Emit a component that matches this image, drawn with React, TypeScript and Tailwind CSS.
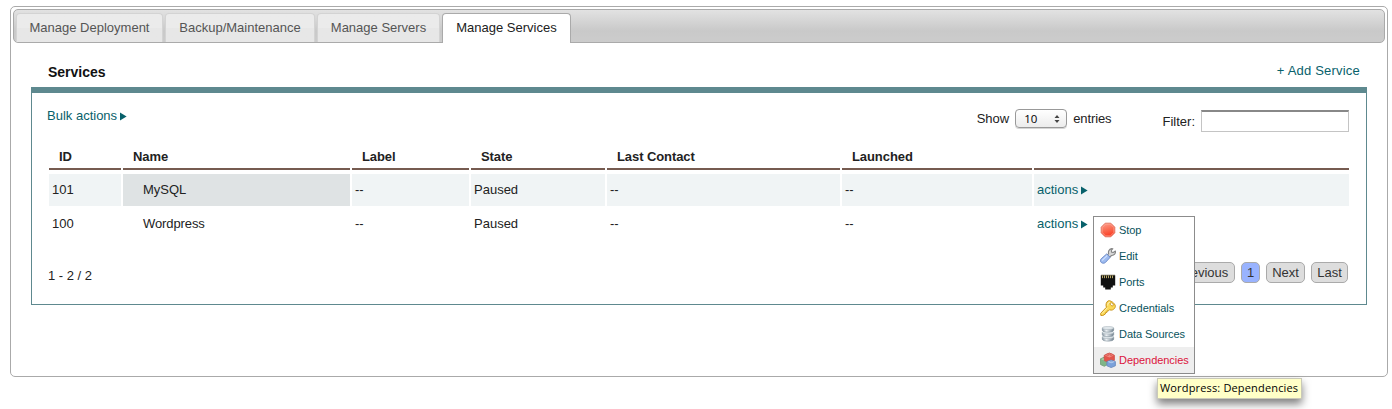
import type { ReactNode } from 'react';

const TABS = [
  { label: 'Manage Deployment', width: 'w-[147px]' },
  { label: 'Backup/Maintenance', width: 'w-[150px]' },
  { label: 'Manage Servers', width: 'w-[123px]' },
];

const COLUMNS = ['ID', 'Name', 'Label', 'State', 'Last Contact', 'Launched', ''];

const ROWS = [
  { id: '101', name: 'MySQL', state: 'Paused' },
  { id: '100', name: 'Wordpress', state: 'Paused' },
];

const GRID =
  'grid grid-cols-[72px_227px_117px_134px_233px_190px_315px] gap-x-[2px]';

function Arrow() {
  return (
    <svg width="7" height="9" viewBox="0 0 7 9" className="ml-[3px] shrink-0">
      <path d="M0 0.5 L6.6 4.5 L0 8.5Z" fill="#08616b" />
    </svg>
  );
}

function StopIcon() {
  return (
    <svg width="16" height="16" viewBox="0 0 16 16">
      <defs>
        <linearGradient id="stop" x1="0" y1="0" x2="0.3" y2="1">
          <stop offset="0" stopColor="#ffa090" />
          <stop offset="0.5" stopColor="#fa7158" />
          <stop offset="1" stopColor="#fb4127" />
        </linearGradient>
      </defs>
      <path d="M5.200 1.200h5.600L14.800 5.200v5.600L10.800 14.800H5.200L1.200 10.800V5.200z" fill="url(#stop)" stroke="#e27a68" />
      <path d="M5.600 2.300h4.800l3.300 3.300v4.800l-3.300 3.300H5.600l-3.300-3.300V5.600z" fill="none" stroke="#ffb0a0" strokeWidth=".8" strokeOpacity=".6" />
    </svg>
  );
}

function WrenchIcon() {
  return (
    <svg width="16" height="16" viewBox="0 0 16 16">
      <path d="M7.200 7.200L8.600 5.600C8 3.400 9 1.300 11.600 .6L12.900 .7 11.300 2.500l.3 1.600 1.600.4L15.400 3c.5 2.500-1.200 4.600-3.800 4.500L9.400 9.300z" fill="#d6d6d6" stroke="#858585" strokeWidth="1.100" strokeLinejoin="round" />
      <path d="M6.700 5.900L10.200 9.300 5.400 14.500C3.400 16.200 .1 14.800.4 12.200c.1-.6.4-1 .8-1.400z" fill="#9dbbf0" stroke="#6686c4" strokeWidth=".9" />
      <path d="M6.900 7.900L2.500 12.100" stroke="#cfe0ff" strokeWidth="1.300" strokeLinecap="round" />
    </svg>
  );
}

function PortIcon() {
  return (
    <svg width="16" height="16" viewBox="0 0 16 16">
      <path d="M.8 1.200h14.400v10.300h-2.400v2h-2v2H5.200v-2h-2v-2H.8z" fill="#111" />
      <path d="M1 1.300h14" stroke="#4c4733" strokeWidth="1" />
      <path d="M2.500 1.500v2.700M4.500 1.500v2.700M6.500 1.500v2.700M8.500 1.500v2.700M10.500 1.500v2.700M12.500 1.500v2.700" stroke="#b5a566" strokeWidth="1" />
    </svg>
  );
}

function KeyIcon() {
  return (
    <svg width="16" height="16" viewBox="0 0 16 16">
      <path
        d="M8.200 .9c1.600-.8 5.500 1.300 6.900 4.200.9 1.900-.8 4.600-3.500 5-.8.1-1.400-.1-2-.4L8.500 10.800l-1.300.1-.2 1.400-1.300.2-.3 1.400-2.600 1.700-2-.2L.7 13.300 6.400 7.300C5.400 4.500 6.500 1.700 8.200.9z"
        fill="#fbd957" stroke="#c8931d" strokeWidth="1" strokeLinejoin="round"
      />
      <path d="M2 13.500L7.500 7.700" stroke="#fff3b5" strokeWidth="1" />
      <path d="M7.700 5.500C7.700 3.500 8.600 2 10 2.200" stroke="#fff5c2" strokeWidth="1" fill="none" />
      <ellipse cx="11.700" cy="4.400" rx="1.900" ry="1.200" transform="rotate(45 11.700 4.400)" fill="#fff" stroke="#c8931d" strokeWidth=".8" />
    </svg>
  );
}

function DatabaseIcon() {
  return (
    <svg width="16" height="16" viewBox="0 0 16 16">
      <defs>
        <linearGradient id="disk" x1="0" x2="1">
          <stop offset="0" stopColor="#83919d" />
          <stop offset="0.35" stopColor="#eef3f6" />
          <stop offset="1" stopColor="#6f7f8c" />
        </linearGradient>
      </defs>
      {[11, 6.5, 2].map((y) => (
        <g key={y}>
          <path d={`M2.300 ${y}v2.200c0 2.600 11.400 2.600 11.400 0v-2.200z`} fill="url(#disk)" stroke="#7b8a96" strokeWidth=".5" />
          <ellipse cx="8" cy={y} rx="5.700" ry="1.600" fill="#dfe6ea" stroke="#a3aeb7" strokeWidth=".5" />
        </g>
      ))}
    </svg>
  );
}

function BricksIcon() {
  return (
    <svg width="16" height="16" viewBox="0 0 16 16">
      <path d="M.5 6.800L4 5.300l3.500 1.500v5.700L4.300 14.300.5 12.500z" fill="#7fb587" stroke="#6d9c75" strokeWidth=".8" />
      <path d="M1.200 7l3.100 1.400 2.700-1.200L4 6z" fill="#b5dbb9" />
      <path d="M4.200 3.300L9.400 1l5 2.200v5.200L9.400 10.700 4.200 8.500z" fill="#e3554c" stroke="#c9504a" strokeWidth=".8" />
      <path d="M4.900 3.500l4.500 2 4.300-2-4.300-2z" fill="#f28a82" />
      <ellipse cx="7.600" cy="2.600" rx="1.400" ry=".9" fill="#f0766c" stroke="#c4514a" strokeWidth=".5" />
      <ellipse cx="11.200" cy="2.600" rx="1.400" ry=".9" fill="#f0766c" stroke="#c4514a" strokeWidth=".5" />
      <path d="M6.900 9.600l4.300-1.600 4.200 1.600v4.200l-4.200 1.800-4.300-1.800z" fill="#7ba2db" stroke="#6485ba" strokeWidth=".8" />
      <path d="M7.500 9.800l3.700 1.500 3.600-1.500-3.600-1.300z" fill="#bed5f5" />
      <ellipse cx="11.200" cy="9.300" rx="1.300" ry=".8" fill="#9dbdea" stroke="#6688bb" strokeWidth=".4" />
    </svg>
  );
}

const MENU: { label: string; icon: ReactNode; active?: boolean }[] = [
  { label: 'Stop', icon: <StopIcon /> },
  { label: 'Edit', icon: <WrenchIcon /> },
  { label: 'Ports', icon: <PortIcon /> },
  { label: 'Credentials', icon: <KeyIcon /> },
  { label: 'Data Sources', icon: <DatabaseIcon /> },
  { label: 'Dependencies', icon: <BricksIcon />, active: true },
];

function ActionMenu() {
  return (
    <div className="absolute left-[59px] top-[8px] z-10 w-[102px] border border-[#8c8c8c] bg-white text-[11px] tracking-[-0.05px] text-[#08525c]">
      {MENU.map((m) => (
        <div
          key={m.label}
          className={
            m.active
              ? 'flex h-[26px] items-center bg-[#eeeeee] pl-[6px] text-[#dc143c]'
              : 'flex h-[26px] items-center pl-[6px]'
          }
        >
          <span className="mr-[3px] w-4 shrink-0">{m.icon}</span>
          <span className="whitespace-nowrap">{m.label}</span>
        </div>
      ))}
      <div className="absolute left-[63px] top-[161px] flex h-[21px] w-[145px] items-center whitespace-nowrap border border-[#c9c9b8] bg-[#ffffc7] pb-px pl-[2px] font-['Open_Sans',sans-serif] text-[11px] tracking-[0.16px] text-black shadow-[0_5px_9px_rgba(0,0,0,0.5)]">
        Wordpress: Dependencies
      </div>
    </div>
  );
}

function PageButton({ children, className }: { children: ReactNode; className: string }) {
  return (
    <button className={`flex h-[21px] items-center justify-center rounded-[5px] border border-[#aaaaaa] pt-px text-[#333333] ${className}`}>
      {children}
    </button>
  );
}

export default function App() {
  return (
    <div className="h-[409px] w-[1392px] overflow-hidden bg-white pl-[10px] pt-[6px] font-['Liberation_Sans',Arial,sans-serif] text-[13px] leading-[16px] text-[#222222]">
      <div className="h-[371px] w-[1378px] rounded-[5px] border border-[#aaaaaa] p-[2px]">
        <div className="flex h-[34px] items-start gap-[2px] rounded-[5px] border border-[#aaaaaa] bg-linear-to-b from-[#e2e2e2] from-0% via-[#c9c9c9] via-65% to-[#cccccc] pl-[2px] pt-[3px] text-[#555555]">
          {TABS.map((t) => (
            <div
              key={t.label}
              className={`flex h-[29px] items-center justify-center rounded-t-[4px] border border-b-0 border-[#d3d3d3] bg-linear-to-b from-[#ebebeb] from-50% to-[#e7e7e7] to-50% ${t.width}`}
            >
              {t.label}
            </div>
          ))}
          <div className="flex h-[30px] w-[129px] items-center justify-center rounded-t-[4px] border border-b-0 border-[#aaaaaa] bg-white pb-px text-[#212121]">
            Manage Services
          </div>
        </div>

        <div className="flex h-[44px] items-center justify-between pl-[35px] pr-[25px] pt-[12px]">
          <h2 className="pt-px text-[14px] font-bold text-[#111111]">Services</h2>
          <a className="tracking-[0.2px] text-[#08616b]">+ Add Service</a>
        </div>

        <div className="ml-[18px] h-[218px] w-[1336px] border border-t-[6px] border-[#5e898f] pl-[17px] pr-[17px]">
          <div className="flex h-[50px] items-start">
            <a className="ml-[-2px] mt-[15px] flex items-center text-[#08616b]">
              Bulk actions
              <Arrow />
            </a>
            <div className="ml-auto mr-[51px] mt-[16px] flex items-center">
              <span>Show</span>
              <span className="ml-[6px] mr-[6px] flex h-[19px] w-[52px] items-center justify-between rounded-[4px] border border-[#999999] bg-linear-to-b from-white to-[#ececec] pl-[8px] pr-[6px] font-['Open_Sans',sans-serif] text-[11.5px] text-black shadow-[0_1px_0_#d5d5d5]">
                10
                <svg width="6" height="8" viewBox="0 0 6 8">
                  <path d="M0.500 3L3 0l2.500 3zM0.500 5L3 8l2.500-3z" fill="#444" />
                </svg>
              </span>
              <span className="tracking-[-0.1px]">entries</span>
            </div>
            <label className="mt-[17px] flex items-center">
              <span className="mt-px">Filter:</span>
              <input className="ml-[6px] h-[22px] w-[148px] border border-[#c4c4c4] border-t-2 border-t-[#888888] bg-white outline-none" />
            </label>
          </div>

          <div className={`${GRID} font-bold text-[#222222]`}>
            {COLUMNS.map((c, i) => (
              <div key={i} className="h-[27px] border-b-2 border-[#765b50] pl-[10px] pt-[6px] tracking-[-0.08px]">
                {c}
              </div>
            ))}
          </div>

          {ROWS.map((r, i) => {
            const cell = i === 0 ? 'flex items-center pl-[3px] bg-[#f0f4f5]' : 'flex items-center pl-[3px]';
            return (
              <div key={r.id} className={i === 0 ? `${GRID} mt-[4px] h-[32px]` : `${GRID} mt-[2px] h-[32px]`}>
                <div className={cell}>{r.id}</div>
                <div className={i === 0 ? 'flex items-center bg-[#dfe3e4] pl-[20px]' : 'flex items-center pl-[20px] tracking-[-0.1px]'}>{r.name}</div>
                <div className={cell}>--</div>
                <div className={cell}>{r.state}</div>
                <div className={cell}>--</div>
                <div className={cell}>--</div>
                <div className={`${cell} relative`}>
                  <a className="flex items-center text-[#08616b]">
                    actions
                    <Arrow />
                  </a>
                  {i === 1 && <ActionMenu />}
                </div>
              </div>
            );
          })}

          <div className="flex items-start pr-px pt-[22px]">
            <span className="ml-[-1px] mr-auto mt-[6px]">1 - 2 / 2</span>
            <div className="flex gap-[6px]">
              <PageButton className="w-[64px] bg-[#dddddd]">Previous</PageButton>
              <PageButton className="w-[19px] bg-[#99b3ff]">1</PageButton>
              <PageButton className="w-[39px] bg-[#dddddd]">Next</PageButton>
              <PageButton className="w-[37px] bg-[#dddddd]">Last</PageButton>
            </div>
          </div>
        </div>
      </div>
    </div>
  );
}
